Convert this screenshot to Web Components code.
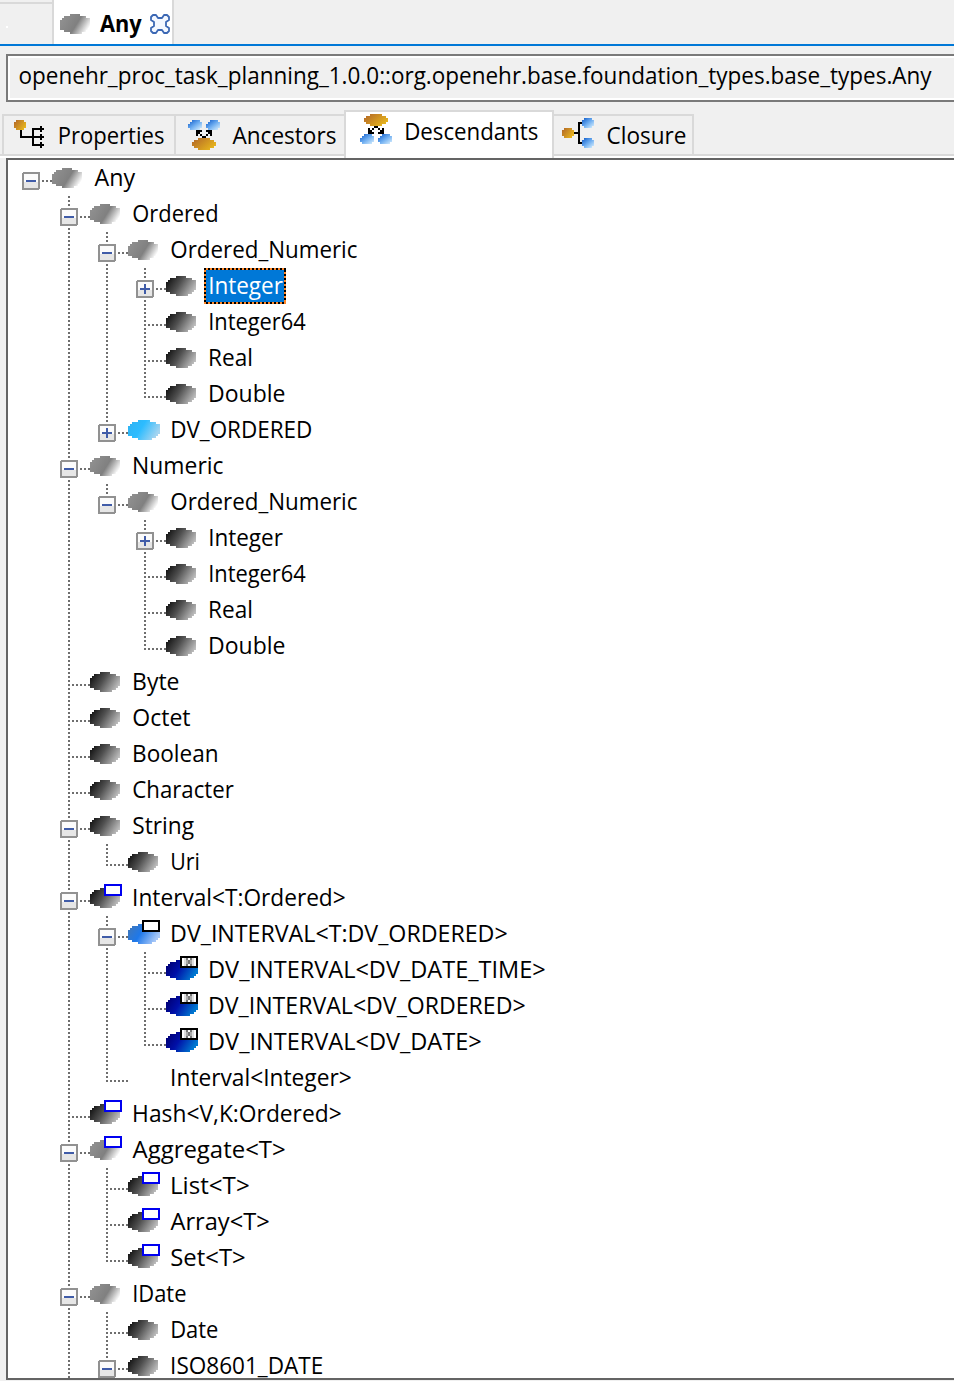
<!DOCTYPE html>
<html lang="en">
<head>
<meta charset="utf-8">
<title>Any</title>
<style>
html,body{margin:0;height:100%;overflow:hidden;background:#f0f0f0}
body{font:24px/36px "Open Sans","Noto Sans",sans-serif;color:#000}
</style>
</head>
<body>
<class-browser></class-browser>
<script>
const cells = [[5,10],[2,13],[1,15],[0,15],[0,15],[0,15],[0,15],[0,14],[2,13],[5,11]];
const blobPath = (wide) => cells.map(([a,b],i)=>{
  const e = b + (wide ? 1 : 0);
  return `M${a*2} ${i*2}h${(e-a)*2}v2h${-(e-a)*2}z`;
}).join('');
const palettes = {
  abs:['#909090','#808080','#ffffff'],
  con:['#161616','#505050','#c0c0c0'],
  sky:['#2eb4f4','#2cbcff','#a4d4f0'],
  blue:['#3c78c0','#1e78ea','#a8c8f8'],
  navy:['#000078','#0010a8','#0078d0']
};
let gid = 0;
function blob(kind, box, x = 0, y = 4) {
  const p = palettes[kind], id = 'g' + (++gid);
  const wide = !['abs','con'].includes(kind);
  const mid = kind === 'abs' ? .56 : .42;
  let s = `<linearGradient id="${id}" gradientUnits="userSpaceOnUse" x1="3" y1="2" x2="27" y2="17"><stop offset="0" stop-color="${p[0]}"/><stop offset="${mid}" stop-color="${p[1]}"/><stop offset="1" stop-color="${p[2]}"/></linearGradient><path transform="translate(${x} ${y})" fill="url(#${id})" d="${blobPath(wide)}"/>`;
  if (box) {
    s += `<rect x="15" y="1" width="16" height="10" fill="#fff" stroke="${box==='blue'?'#0000f0':'#000'}" stroke-width="2"/>`;
    if (box === 'x') s += '<path d="M18 2h2v8h-2zM26 2h2v8h-2z" fill="#ddd"/><path d="M20 2h2v2h-2zM24 2h2v2h-2zM22 4h2v4h-2zM20 8h2v2h-2zM24 8h2v2h-2z" fill="#777"/><path d="M20 4h2v4h-2zM24 4h2v4h-2z" fill="#aaa"/>';
  }
  return s;
}

/* A line of text condensed so that its ink runs from "from" to "to" */
const pen = document.createElement('canvas').getContext('2d');
customElements.define('fit-text', class extends HTMLElement {
  connectedCallback() {
    const from = +this.getAttribute('from'), to = +this.getAttribute('to');
    const w = this.getAttribute('weight') || 400;
    pen.font = `${w} 24px "Open Sans","Noto Sans",sans-serif`;
    const m = pen.measureText(this.textContent);
    const k = (to - from) / (m.actualBoundingBoxLeft + m.actualBoundingBoxRight);
    const start = from + k * m.actualBoundingBoxLeft;
    this.attachShadow({mode:'open'}).innerHTML = `<style>:host{display:block;width:0;white-space:pre;font-weight:${w}}
      span{display:inline-block;transform-origin:0 0;transform:translateX(${start}px) scaleX(${k})}</style><span><slot></slot></span>`;
  }
});

customElements.define('tree-row', class extends HTMLElement {
  connectedCallback() {
    const {level:L, exp, icon, box, guides, last, end, label, sel} = this.data;
    const x = 22 + 38*L, w = 44 + 38*L;
    let g = '';
    const line = (x1,y1,x2,y2) => g += `<path d="M${x1} ${y1}L${x2} ${y2}" stroke="#6e6e6e" stroke-width="2" stroke-dasharray="2 2"/>`;
    guides.forEach(l => line(23+38*l,0,23+38*l,36));
    if (L) {
      line(x+1,0,x+1,exp?12:22);
      if (!last) line(x+1,exp?32:20,x+1,36);
    }
    if (exp) {
      line(x+12,21,x+22,21);
      g += `<g transform="translate(${x-8} 12)"><rect x="1" y="1" width="16" height="16" rx="1" fill="#fbfbfb" stroke="#919191" stroke-width="2"/><path d="M2 10h14v6h-14z" fill="#e6e6e6"/><path d="M4 8h10v2h-10z" fill="#405ca8"/>${exp==='+'?'<path d="M8 4h2v10h-2z" fill="#405ca8"/>':''}</g>`;
    } else line(x,21,x+22,21);
    this.attachShadow({mode:'open'}).innerHTML = `<style>
      :host{display:flex;height:36px;flex:none}
      :host(:last-child){height:30px}
      svg{display:block;flex:none;shape-rendering:crispEdges}
      .i{margin-top:4px}
      .t{margin-left:6px;height:36px;box-sizing:border-box;padding-top:4px;line-height:26px}
      :host(:last-child) .t{height:30px}
      :host(:last-child) svg:first-child{height:30px}
      .sel{width:82px;color:#fff;background:
        repeating-linear-gradient(90deg,#000 0 2px,#ff8728 2px 4px) 0 0/100% 2px no-repeat,
        repeating-linear-gradient(90deg,#ff8728 0 2px,#000 2px 4px) 0 100%/100% 2px no-repeat,
        repeating-linear-gradient(#000 0 2px,#ff8728 2px 4px) 0 0/2px 100% no-repeat,
        repeating-linear-gradient(#ff8728 0 2px,#000 2px 4px) 100% 0/2px 100% no-repeat,#0078d7}
      </style><svg width="${w}" height="36">${g}</svg>
      <svg class="i" width="32" height="24">${icon?blob(icon,box):''}</svg>
      <div class="t ${sel?'sel':''}"></div>`;
    const t = document.createElement('fit-text');
    const base = 90 + 38*L;
    t.setAttribute('from', /^A/.test(label) ? 4.5 : /^[OCS]/.test(label) ? 5.2 : 6);
    t.setAttribute('to', end - base);
    t.textContent = label;
    this.shadowRoot.querySelector('.t').append(t);
  }
});

const rows = [
 [0,'-','abs','','Any',136],[1,'-','abs','','Ordered',217],[2,'-','abs','','Ordered_Numeric',357],
 [3,'+','con','','Integer',283,1],[3,'','con','','Integer64',306],[3,'','con','','Real',252],[3,'','con','','Double',285],
 [2,'+','sky','','DV_ORDERED',311],[1,'-','abs','','Numeric',223],[2,'-','abs','','Ordered_Numeric',357],
 [3,'+','con','','Integer',283],[3,'','con','','Integer64',306],[3,'','con','','Real',252],[3,'','con','','Double',285],
 [1,'','con','','Byte',179],[1,'','con','','Octet',190],[1,'','con','','Boolean',217],[1,'','con','','Character',234],
 [1,'-','con','','String',194],[2,'','con','','Uri',199],[1,'-','con','blue','Interval<T:Ordered>',345],
 [2,'-','blue','black','DV_INTERVAL<T:DV_ORDERED>',507],[3,'','navy','x','DV_INTERVAL<DV_DATE_TIME>',545],
 [3,'','navy','x','DV_INTERVAL<DV_ORDERED>',525],[3,'','navy','x','DV_INTERVAL<DV_DATE>',481],
 [2,'','','','Interval<Integer>',351],[1,'','con','blue','Hash<V,K:Ordered>',341],[1,'-','abs','blue','Aggregate<T>',285],
 [2,'','con','blue','List<T>',249],[2,'','con','blue','Array<T>',269],[2,'','con','blue','Set<T>',245],
 [1,'-','abs','','IDate',186],[2,'','con','','Date',218],[2,'-','con','','ISO8601_DATE',322]];

customElements.define('class-tree', class extends HTMLElement {
  connectedCallback() {
    const root = this.attachShadow({mode:'open'});
    root.innerHTML = `<style>:host{display:flex;flex-direction:column;height:1218px;margin-left:6px;border:2px solid #646464;border-right:0;background:#fff;overflow:hidden}</style>`;
    const more = (i,l) => {
      for (let j=i+1;j<rows.length;j++) { if (rows[j][0]===l) return true; if (rows[j][0]<l) return false; }
      return l === 1;
    };
    rows.forEach(([level,exp,icon,box,label,end,sel],i) => {
      const guides = [];
      for (let l=1;l<level;l++) if (more(i,l)) guides.push(l);
      const r = document.createElement('tree-row');
      r.data = {level,exp,icon,box,label,end,sel,guides,last:!more(i,level)};
      root.append(r);
    });
  }
});

const defs = `<defs><linearGradient id="o" x1="0" y1="0" x2="1" y2=".6"><stop offset="0" stop-color="#b06428"/><stop offset="1" stop-color="#e6b41e"/></linearGradient><linearGradient id="b" x1="0" y1="0" x2="1" y2="1"><stop offset=".1" stop-color="#1e68d0"/><stop offset=".5" stop-color="#6cacf0"/><stop offset="1" stop-color="#e0f4ff"/></linearGradient></defs>`;
const lobe = (x,y) => `<path transform="translate(${x} ${y})" fill="url(#b)" d="M4 0h8v2h2v6h-2v2h-10v-2h-2v-4h2v-2h2z"/>`;
const bead = (x,y) => `<path transform="translate(${x} ${y})" fill="url(#b)" d="M2 0h8v2h2v6h-2v2h-8v-2h-2v-6h2z"/>`;
const ball = (x,y) => `<path transform="translate(${x} ${y})" fill="url(#o)" d="M2 0h8v2h2v6h-2v2h-8v-2h-2v-6h2z"/>`;
const oval = (x,y) => `<path transform="translate(${x} ${y})" fill="url(#o)" d="M6 0h12v2h4v2h2v4h-2v2h-4v2h-12v-2h-4v-2h-2v-4h2v-2h4z"/>`;
const icons = {
  properties: ball(0,0)+'<path d="M6 10h2v6h10v-8h8v-2h2v2h2v2h-2v2h-2v-2h-6v6h6v-2h2v2h2v2h-2v2h-2v-2h-6v6h6v-2h2v2h2v2h-2v2h-2v-2h-8v-8h-12z"/>',
  ancestors: lobe(0,0)+lobe(18,0)+oval(4,18)+'<path d="M8 10h6v2h-6zM18 10h6v2h-6zM8 12h4v2h-4zM20 12h4v2h-4zM8 14h2v2h-2zM12 14h2v2h-2zM18 14h2v2h-2zM22 14h2v2h-2zM14 16h4v2h-4z"/>',
  descendants: oval(4,0)+lobe(0,20)+lobe(18,20)+'<path d="M14 12h4v2h-4zM8 14h2v2h-2zM12 14h2v2h-2zM18 14h2v2h-2zM22 14h2v2h-2zM8 16h4v2h-4zM20 16h4v2h-4zM8 18h6v2h-6zM18 18h6v2h-6z"/>',
  closure: ball(0,10)+bead(20,0)+bead(20,20)+'<path d="M12 14h4v-10h4v2h-2v18h2v2h-4v-10h-4z"/>'
};
customElements.define('view-tab', class extends HTMLElement {
  connectedCallback() {
    const a = n => this.getAttribute(n), on = this.hasAttribute('active');
    this.attachShadow({mode:'open'}).innerHTML = `<style>
    :host{display:flex;box-sizing:border-box;width:${a('w')}px;height:${on?48:42}px;flex:none;border-top:2px solid #d9d9d9;border-right:2px solid #d9d9d9;${on?'border-left:2px solid #d9d9d9;background:#fff':'border-bottom:2px solid #d9d9d9'}}
    :host([first]){border-left:2px solid #d9d9d9}
    :host([open-end]){border-right:0}
    svg{flex:none;margin:${a('iy')}px 0 0 ${a('ix')}px;shape-rendering:crispEdges}
    .t{width:0;margin-top:1px}
    </style><svg width="34" height="32">${defs}${icons[a('icon')]}</svg><div class="t"><fit-text from="${a('from')}" to="${a('to')}">${this.textContent}</fit-text></div>`;
  }
});

customElements.define('class-browser', class extends HTMLElement {
  connectedCallback() {
    this.attachShadow({mode:'open'}).innerHTML = `<style>
    :host{display:block;width:954px;height:1381px;overflow:hidden;background:#f0f0f0}
    .docs{display:flex;height:44px;border-bottom:2px solid #0078d7}
    .stub{width:52px;margin-top:2px;border-top:2px solid #d9d9d9}
    .stub i{display:block;width:2px;height:2px;background:#fff;margin:22px 0 0 6px}
    .doc{display:flex;box-sizing:border-box;width:122px;height:44px;background:#fff;border:solid #d9d9d9;border-width:0 2px}
    .doc svg{flex:none}
    .b{margin:14px 0 0 6px;shape-rendering:crispEdges}.x{margin:14px 0 0 56px}
    .doc fit-text{margin-top:5px}
    .path{box-sizing:border-box;height:48px;margin:8px 0 0 6px;border:2px solid #7a7a7a;border-right:0;box-shadow:inset 2px 2px #fff,inset 0 -2px #fff;padding-top:1px}
    .tabs{display:flex;align-items:flex-end;height:48px;margin-top:8px}
    .tabs>view-tab:not([active]){margin-bottom:2px}
    .edge{height:2px;background:#d9d9d9;margin-bottom:2px}
    .white{background:linear-gradient(#fff,#fff) 0 100%/100% 2px no-repeat}
    </style>
    <div class="docs"><div class="stub"><i></i></div>
      <div class="doc"><svg class="b" width="34" height="20">${blob('abs','',0,0)}</svg>
      <fit-text weight="700" from="6" to="48">Any</fit-text>
      <svg class="x" width="20" height="20"><path fill="#f4f8ff" stroke="#3c68b4" stroke-width="1.8" stroke-linejoin="round" d="M3 1h3l2 3h4l2-3h3l2 2v3l-3 2v4l3 2v3l-2 2h-3l-2-3h-4l-2 3h-3l-2-2v-3l3-2v-4l-3-2v-3z"/></svg></div></div>
    <div class="path"><fit-text from="11.5" to="924.5">openehr_proc_task_planning_1.0.0::org.openehr.base.foundation_types.base_types.Any</fit-text></div>
    <div class="tabs white"><div class="edge" style="width:2px"></div><view-tab first w="174" icon="properties" ix="10" iy="4" from="11.5" to="116">Properties</view-tab><view-tab open-end w="168" icon="ancestors" ix="12" iy="4" from="10.5" to="114">Ancestors</view-tab><view-tab active w="210" icon="descendants" ix="14" iy="2" from="12" to="144">Descendants</view-tab><view-tab w="140" icon="closure" ix="8" iy="2" from="11.5" to="90">Closure</view-tab><div class="edge" style="flex:1"></div></div>
    <class-tree></class-tree>`;
  }
});
</script>
</body>
</html>
